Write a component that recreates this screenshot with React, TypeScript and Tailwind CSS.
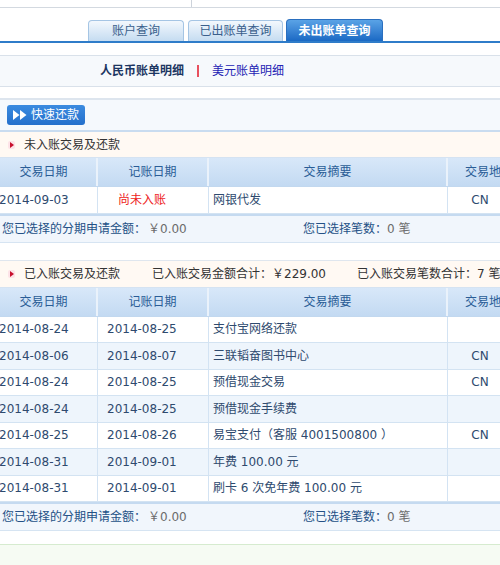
import React from 'react';

const font = "font-['DejaVu_Sans','Noto_Sans_CJK_SC',sans-serif]";

const cols = 'grid grid-cols-[107px_111px_239px_64px_1fr]';

function FastForward() {
  return (
    <svg width="14" height="10" viewBox="0 0 14 10">
      <path d="M0 0 L6.5 5 L0 10 Z" fill="#fff" />
      <path d="M7 0 L13.5 5 L7 10 Z" fill="#fff" />
    </svg>
  );
}

function Marker() {
  return (
    <svg width="8" height="10" viewBox="0 0 8 10" className="shrink-0">
      <rect x="0" y="1" width="7" height="8" rx="2" fill="#fde3e8" />
      <path d="M2 2 L6 5 L2 8 Z" fill="#c8102e" />
    </svg>
  );
}

function TableHead() {
  const cell = 'flex items-center border-r-2 border-[#eaf2fb] text-[#2a5d96]';
  return (
    <div className={`${cols} h-[29px] bg-gradient-to-b from-[#d8e8f9] to-[#c3daf2] border-b border-[#c2d8ef]`}>
      <div className={`${cell} justify-center`}>交易日期</div>
      <div className={`${cell} justify-center`}>记账日期</div>
      <div className={`${cell} justify-center`}>交易摘要</div>
      <div className="flex items-center pl-[17px] whitespace-nowrap text-[#2a5d96]">交易地点</div>
      <div />
    </div>
  );
}

interface RowData {
  date: string;
  post: string;
  desc: string;
  place: string;
  red?: boolean;
}

function Row({ r, alt }: { r: RowData; alt: boolean }) {
  const cell = 'flex items-center border-r border-[#d3e3f3] whitespace-nowrap';
  return (
    <div
      className={`${cols} h-[26.5px] border-b border-[#d3e3f2] ${alt ? 'bg-[#eef5fc]' : 'bg-white'}`}
    >
      <div className={`${cell} pl-[8px] text-[#2e4a6e]`}>{r.date}</div>
      <div className={`${cell} ${r.red ? 'pl-[20px] text-[#ee1c1c]' : 'pl-[9px] text-[#2e4a6e]'}`}>{r.post}</div>
      <div className={`${cell} pl-[4px] text-[#2e4a6e]`}>{r.desc}</div>
      <div className="flex items-center justify-center text-[#2e4a6e]">{r.place}</div>
      <div />
    </div>
  );
}

function Summary() {
  return (
    <div className="flex items-center h-[29px] bg-[#f1f6fc] border-t-2 border-b border-t-[#c5daf0] border-b-[#d6e4f2]">
      <div className="w-[312px] pl-[11px] whitespace-nowrap">
        <span className="text-[#245186]">您已选择的分期申请金额：</span>
        <span className="text-[#6b6b6b] pl-[2px]">￥0.00</span>
      </div>
      <div className="whitespace-nowrap">
        <span className="text-[#245186]">您已选择笔数：</span>
        <span className="text-[#6b6b6b]">0 笔</span>
      </div>
    </div>
  );
}

function SectionHead({ children, h = 'h-[27px]' }: { children: React.ReactNode; h?: string }) {
  return (
    <div className={`flex items-center ${h} pl-[17px] gap-[8px] bg-[#fff9f3] border-b border-[#d5e3f2] text-[#333] whitespace-nowrap`}>
      {children}
    </div>
  );
}

const rows: RowData[] = [
  { date: '2014-08-24', post: '2014-08-25', desc: '支付宝网络还款', place: '' },
  { date: '2014-08-06', post: '2014-08-07', desc: '三联韬奋图书中心', place: 'CN' },
  { date: '2014-08-24', post: '2014-08-25', desc: '预借现金交易', place: 'CN' },
  { date: '2014-08-24', post: '2014-08-25', desc: '预借现金手续费', place: '' },
  { date: '2014-08-25', post: '2014-08-26', desc: '易宝支付（客服 4001500800 ）', place: 'CN' },
  { date: '2014-08-31', post: '2014-09-01', desc: '年费 100.00 元', place: '' },
  { date: '2014-08-31', post: '2014-09-01', desc: '刷卡 6 次免年费 100.00 元', place: '' },
];

export default function App() {
  return (
    <div className={`w-[500px] h-[565px] overflow-hidden bg-white text-[12px] leading-none ${font}`}>
      {/* top strip */}
      <div className="flex h-[8px] border-b border-[#d3d9e0]">
        <div className="w-[192px] border-r border-[#cdd3db]" />
      </div>

      {/* tabs */}
      <div className="flex items-end h-[35px] pl-[88px] gap-[4px] border-b-2 border-[#2f7cc9]">
        <div className="w-[96px] h-[21px] flex items-center justify-center rounded-t-[4px] border border-b-0 border-[#a5c5e4] bg-gradient-to-b from-[#f3f8fd] to-[#c5dcf1] text-[#3a5f8c]">
          账户查询
        </div>
        <div className="w-[95px] h-[21px] flex items-center justify-center rounded-t-[4px] border border-b-0 border-[#a5c5e4] bg-gradient-to-b from-[#f3f8fd] to-[#c5dcf1] text-[#3a5f8c]">
          已出账单查询
        </div>
        <div className="w-[97px] h-[22px] -ml-[1px] flex items-center justify-center rounded-t-[4px] border border-b-0 border-[#2a6fbf] bg-gradient-to-b from-[#5aa3e6] to-[#1a69c4] text-white font-bold">
          未出账单查询
        </div>
      </div>

      <div className="h-[12px]" />

      {/* currency switch */}
      <div className="flex items-center h-[32px] pl-[100px] bg-[#f6f9fc] border-y border-[#d9e1ea]">
        <span className="text-[#1c3662] font-bold">人民币账单明细</span>
        <span className="mx-[13px] w-[2px] h-[12px] bg-[#e8505e]" />
        <span className="text-[#2424b4]">美元账单明细</span>
      </div>

      <div className="h-[11px]" />

      {/* content, extends past the left edge */}
      <div className="w-[580px] -ml-[9px]">
        <div className="flex items-center h-[34px] pl-[16px] bg-[#f5f9fd] border-t-2 border-b-2 border-t-[#dde5ee] border-b-[#c9dcf0]">
          <button className="flex items-center gap-[4px] h-[20px] w-[78px] pl-[6px] rounded-[3px] bg-gradient-to-b from-[#3b8be0] to-[#2470cc] text-white">
            <FastForward />
            <span>快速还款</span>
          </button>
        </div>

        <SectionHead h="h-[26px]">
          <Marker />
          <span>未入账交易及还款</span>
        </SectionHead>
        <TableHead />
        <Row r={{ date: '2014-09-03', post: '尚未入账', desc: '网银代发', place: 'CN', red: true }} alt={false} />
        <Summary />

        <div className="h-[17px]" />

        <div className="border-t border-[#dfe6ee]">
          <SectionHead>
            <Marker />
            <span className="w-[120px]">已入账交易及还款</span>
            <span className="w-[197px]">
              已入账交易金额合计：<span>￥229.00</span>
            </span>
            <span>已入账交易笔数合计：7 笔</span>
          </SectionHead>
        </div>
        <TableHead />
        {rows.map((r, i) => (
          <Row key={i} r={r} alt={i % 2 === 1} />
        ))}
        <Summary />
      </div>

      <div className="h-[13px]" />
      <div className="h-[30px] border-t border-[#d6ebcf] bg-[#f6fbf3]" />
    </div>
  );
}
